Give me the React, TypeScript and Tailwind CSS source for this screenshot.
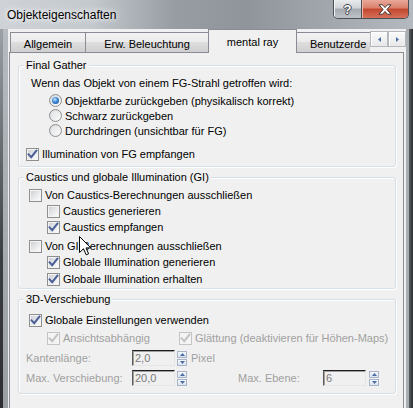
import React from "react";

/* Win7-style property dialog: "Objekteigenschaften" / mental ray tab */

function Check({ checked = false, disabled = false }: { checked?: boolean; disabled?: boolean }) {
  return (
    <span
      className={`flex h-[13px] w-[13px] shrink-0 items-center justify-center border p-[1px] ${
        disabled ? "border-[#c4c4c4] bg-[#f4f4f4]" : "border-[#8e8f8f] bg-[#f4f4f4]"
      }`}
    >
      <span
        className={`flex h-full w-full items-center justify-center ${
          disabled
            ? "bg-[#f4f4f4]"
            : "bg-[linear-gradient(135deg,#cdd1d6_0%,#e6e8ea_50%,#fbfbfb_100%)]"
        }`}
      >
        {checked && (
          <svg width="11" height="11" viewBox="0 0 11 11" className="overflow-visible">
            <path
              d="M1.6 5.4 L4.2 8.2 L9.4 1.6"
              fill="none"
              stroke={disabled ? "#c2c2c2" : "#4b5f96"}
              strokeWidth="2"
              strokeLinecap="square"
            />
          </svg>
        )}
      </span>
    </span>
  );
}

function Radio({ checked = false }: { checked?: boolean }) {
  return (
    <span className="flex h-[13px] w-[13px] shrink-0 items-center justify-center rounded-full border border-[#8e8f8f] bg-[linear-gradient(135deg,#d3d6da,#fbfbfb)]">
      {checked ? (
        <span className="h-[7px] w-[7px] rounded-full bg-[radial-gradient(circle_at_40%_35%,#bfe2ff_0%,#3d89d6_45%,#14418a_100%)]" />
      ) : (
        <span className="h-[9px] w-[9px] rounded-full bg-[linear-gradient(135deg,#e1e3e5,#f8f8f8)]" />
      )}
    </span>
  );
}

function Spinner() {
  return (
    <span className="flex h-[15px] w-[10px] shrink-0 flex-col gap-[1px]">
      {[0, 1].map((i) => (
        <span
          key={i}
          className="flex flex-1 items-center justify-center border border-[#a9b4c6] bg-[linear-gradient(to_bottom,#f5f8fc,#d9e2ee)]"
        >
          <svg width="5" height="3" viewBox="0 0 5 3">
            <path d={i === 0 ? "M0 3 L2.5 0 L5 3 Z" : "M0 0 L2.5 3 L5 0 Z"} fill="#4a6ca6" />
          </svg>
        </span>
      ))}
    </span>
  );
}

function Field({ value }: { value: string }) {
  return (
    <span className="flex h-[16px] w-[43px] shrink-0 items-center border border-t-[#1e1e1e] border-l-[#5c5c5c] border-r-[#e6e6e6] border-b-[#e6e6e6] bg-[#f0f0f0] pl-[2px] text-[#7a7a7a] shadow-[inset_1px_1px_0_#a0a0a0]">
      {value}
    </span>
  );
}

function Row({
  label,
  checked,
  disabled,
  indent = "",
  className = "",
}: {
  label: string;
  checked?: boolean;
  disabled?: boolean;
  indent?: string;
  className?: string;
}) {
  return (
    <div className={`flex h-[16px] items-center gap-[3px] ${indent} ${className}`}>
      <Check checked={checked} disabled={disabled} />
      <span className={disabled ? "text-[#a0a0a0]" : ""}>{label}</span>
    </div>
  );
}

function Group({
  title,
  className = "",
  children,
}: {
  title: string;
  className?: string;
  children: React.ReactNode;
}) {
  return (
    <div
      className={`ml-[8px] mr-[7px] rounded-[3px] border border-[#d5dfe5] shadow-[inset_1px_1px_0_#fff,1px_1px_0_#fff] pl-[7px] ${className}`}
    >
      <div className="-mt-[8px] ml-[-2px] w-fit bg-[#f0f0f0] px-[2px] leading-[15px]">{title}</div>
      {children}
    </div>
  );
}

const tabBg =
  "bg-[linear-gradient(to_bottom,#f2f2f2_0%,#ebebeb_45%,#dddddd_50%,#cfcfcf_100%)]";

function Tab({ label, width, active = false }: { label: string; width: string; active?: boolean }) {
  return (
    <div
      className={`flex shrink-0 border border-b-0 border-[#898c95] ${width} ${
        active
          ? "relative z-10 -ml-px h-[24px] items-start justify-center bg-[#f0f0f0] pt-[4px]"
          : `-ml-px mt-[3px] h-[20px] items-center justify-center ${tabBg} pt-[2px]`
      }`}
    >
      <span className="whitespace-nowrap">{label}</span>
    </div>
  );
}

export default function App() {
  return (
    <div className="relative flex h-[408px] w-[413px] flex-col overflow-hidden bg-[#b1b7bd] [font-family:'Liberation_Sans',Arial,sans-serif] text-[11px] leading-[16px] text-black">
      {/* ---------- Title bar ---------- */}
      <div className="flex h-[29px] shrink-0 items-start bg-[linear-gradient(to_right,#cfd3d7_0%,#c4c9ce_22%,#979da3_42%,#8f959b_60%,#a6acb2_85%,#b3b9bf_100%)]">
        <span className="pl-[7px] pt-[7px] text-[12px] leading-[16px] [text-shadow:0_0_8px_#fff,0_0_4px_#fff]">
          Objekteigenschaften
        </span>
        <div className="ml-auto mr-[4px] flex h-[19px] overflow-hidden rounded-b-[5px] border border-t-0 border-[#4a4f55]">
          <div className="flex w-[28px] items-center justify-center border-r border-[#4a4f55] bg-[linear-gradient(to_bottom,#e9ebed_0%,#cfd3d7_45%,#a3a9af_50%,#bdc3c9_100%)] shadow-[inset_1px_0_0_#f4f6f8]">
            <span className="text-[13px] font-bold leading-none text-white [text-shadow:1px_0_0_#3c4147,-1px_0_0_#3c4147,0_1px_0_#3c4147,0_-1px_0_#3c4147]">
              ?
            </span>
          </div>
          <div className="flex w-[46px] items-center justify-center bg-[linear-gradient(to_bottom,#eaa899_0%,#d9806c_45%,#c2472d_50%,#d6705a_100%)] shadow-[inset_1px_0_0_#f0b8aa]">
            <svg width="14" height="11" viewBox="0 0 14 11">
              <path
                d="M1 0.8 H4.6 L7 3.6 L9.4 0.8 H13 L8.9 5.5 L13 10.2 H9.4 L7 7.4 L4.6 10.2 H1 L5.1 5.5 Z"
                fill="#fff"
                stroke="#3b2a26"
                strokeWidth="0.9"
                strokeLinejoin="round"
              />
            </svg>
          </div>
        </div>
      </div>

      {/* ---------- Frame + client area ---------- */}
      <div className="flex min-h-0 flex-1">
        <div className="flex w-[8px] shrink-0">
          <div className="w-[3px] bg-[linear-gradient(to_bottom,#9aa0a6,#3b3e42_60%,#2c2e31)]" />
          <div className="flex-1 bg-[linear-gradient(to_bottom,#b5bac0,#9a9fa4)]" />
        </div>

        <div className="flex w-[398px] shrink-0 flex-col bg-[#f0f0f0] pl-[1px]">
          {/* tabs */}
          <div className="relative z-10 flex h-[24px] shrink-0 items-start">
            <div className="flex min-w-0 flex-1 items-start overflow-hidden pl-[2px]">
              <Tab label="Allgemein" width="w-[76px]" />
              <Tab label="Erw. Beleuchtung" width="w-[124px]" />
              <Tab label="mental ray" width="w-[89px]" active />
              <div
                className={`-ml-px mt-[3px] flex h-[20px] w-[90px] shrink-0 items-center border border-b-0 border-[#898c95] ${tabBg} pl-[13px] pt-[2px]`}
              >
                <span className="whitespace-nowrap">Benutzerde</span>
              </div>
            </div>
            <div className="mt-[2px] flex">
              {["M3 0 L0 2.5 L3 5 Z", "M0 0 L3 2.5 L0 5 Z"].map((d) => (
                <div
                  key={d}
                  className="flex h-[16px] w-[18px] items-center justify-center border border-[#b4b7bc] bg-[linear-gradient(to_bottom,#fafafa,#e8e8e8)] shadow-[inset_1px_1px_0_#fff]"
                >
                  <svg width="3" height="5" viewBox="0 0 3 5">
                    <path d={d} fill="#4a6ca6" />
                  </svg>
                </div>
              ))}
            </div>
          </div>

          {/* panel */}
          <div className="-mt-px mr-[2px] h-[400px] shrink-0 border border-[#898c95] bg-[#f0f0f0]">
            <Group title="Final Gather" className="mt-[12px] pb-[4px]">
              <div className="mt-[2px] pl-[5px]">Wenn das Objekt von einem FG-Strahl getroffen wird:</div>
              <div className="mt-[2px] pl-[23px]">
                {[
                  ["Objektfarbe zurückgeben (physikalisch korrekt)", true],
                  ["Schwarz zurückgeben", false],
                  ["Durchdringen (unsichtbar für FG)", false],
                ].map(([t, on]) => (
                  <div key={t as string} className="flex h-[15px] items-center gap-[3px]">
                    <Radio checked={on as boolean} />
                    <span>{t as string}</span>
                  </div>
                ))}
              </div>
              <Row label="Illumination von FG empfangen" checked className="mt-[8px] h-[15px]" />
            </Group>

            <Group title="Caustics und globale Illumination (GI)" className="mt-[10px] pb-[1px]">
              <Row label="Von Caustics-Berechnungen ausschließen" indent="pl-[3px]" className="mt-[2px]" />
              <Row label="Caustics generieren" indent="pl-[21px]" />
              <Row label="Caustics empfangen" checked indent="pl-[21px]" />
              <Row label="Von GI-Berechnungen ausschließen" indent="pl-[3px]" className="mt-[3px]" />
              <Row label="Globale Illumination generieren" checked indent="pl-[21px]" />
              <Row label="Globale Illumination erhalten" checked indent="pl-[21px]" className="mt-[1px]" />
            </Group>

            <Group title="3D-Verschiebung" className="mt-[10px] pb-[7px]">
              <Row label="Globale Einstellungen verwenden" checked indent="pl-[3px]" className="mt-[5px]" />
              <div className="mt-[2px] flex h-[16px] items-center">
                <Row label="Ansichtsabhängig" checked disabled indent="w-[153px] pl-[21px]" />
                <Row label="Glättung (deaktivieren für Höhen-Maps)" checked disabled />
              </div>
              <div className="mt-[4px] flex h-[16px] items-center text-[#a0a0a0]">
                <span className="w-[106px] shrink-0">Kantenlänge:</span>
                <Field value="2,0" />
                <span className="ml-[2px]">
                  <Spinner />
                </span>
                <span className="ml-[4px]">Pixel</span>
              </div>
              <div className="mt-[4px] flex h-[16px] items-center text-[#a0a0a0]">
                <span className="w-[106px] shrink-0">Max. Verschiebung:</span>
                <Field value="20,0" />
                <span className="ml-[2px]">
                  <Spinner />
                </span>
                <span className="ml-[51px] w-[85px] shrink-0">Max. Ebene:</span>
                <Field value="6" />
                <span className="ml-[3px]">
                  <Spinner />
                </span>
              </div>
            </Group>
          </div>
        </div>

        <div className="w-[3px] shrink-0 bg-[#a9aeb3]" />
        <div className="w-[4px] shrink-0 bg-[linear-gradient(to_right,#5a5e62,#2a2c2e)]" />
      </div>

      {/* mouse pointer over the dialog */}
      <svg
        className="pointer-events-none absolute left-[79px] top-[236px]"
        width="13"
        height="20"
        viewBox="0 0 13 20"
      >
        <path
          d="M0.5 0.5 L0.5 16.5 L4.5 12.8 L7.2 18.8 L9.6 17.8 L7 11.9 L11.8 11.9 Z"
          fill="#fff"
          stroke="#000"
          strokeWidth="1"
          strokeLinejoin="miter"
        />
      </svg>
    </div>
  );
}
